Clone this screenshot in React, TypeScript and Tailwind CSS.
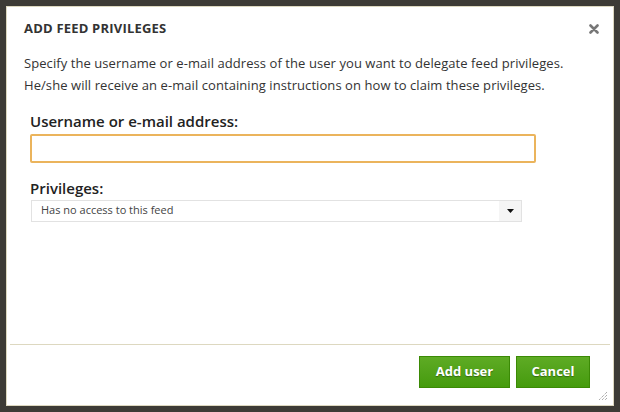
import { useState } from "react";

const font = { fontFamily: '"Open Sans", "Noto Sans", sans-serif' };

const App = () => {
  const [email, setEmail] = useState("");

  return (
    <div className="w-[620px] h-[412px] bg-[#3d3b36] p-[6px] overflow-hidden" style={font}>
      <div className="h-[400px] w-[608px] bg-white border border-[#ddd8c0] flex flex-col relative">
        {/* Header */}
        <div className="flex items-center justify-between pl-[17px] pr-[14px] pt-[12px]">
          <h2 className="text-[13px] font-bold text-[#333] tracking-[0.2px]">ADD FEED PRIVILEGES</h2>
          <button className="text-[#777] text-[15px] font-bold leading-none" aria-label="Close">
            <svg width="10" height="10" viewBox="0 0 10 10">
              <path d="M1.5 1.5l7 7M8.5 1.5l-7 7" stroke="#777" strokeWidth="2.6" strokeLinecap="round" />
            </svg>
          </button>
        </div>

        {/* Body */}
        <div className="pl-[17px] pr-[14px] pt-[13px] flex-1">
          <p className="text-[13px] leading-[22px] text-[#333] tracking-[0.07px]">
            Specify the username or e-mail address of the user you want to delegate feed privileges.
            <br />
            He/she will receive an e-mail containing instructions on how to claim these privileges.
          </p>

          <div className="pl-[6px] mt-[15px]">
            <label className="block text-[15px] font-semibold text-[#222] leading-[20px]">
              Username or e-mail address:
            </label>
            <input
              autoFocus
              value={email}
              onChange={(e) => setEmail(e.target.value)}
              className="mt-[3px] block w-[506px] h-[29px] border-2 border-[#ebb45c] rounded-[2px] px-[3px] text-[13px] outline-none caret-[#222]"
            />

            <label className="block text-[15px] font-semibold text-[#222] leading-[20px] mt-[15px]">
              Privileges:
            </label>
            <div className="ml-[1px] mt-[2px] w-[491px] h-[22px] border border-[#e2e2e2] flex items-center">
              <span className="flex-1 pl-[9px] text-[11px] text-[#444]">Has no access to this feed</span>
              <span className="w-[22px] h-full bg-[#f5f5f5] flex items-center justify-center">
                <svg width="7" height="4" viewBox="0 0 7 4">
                  <path d="M0 0h7L3.5 4z" fill="#111" />
                </svg>
              </span>
            </div>
          </div>
        </div>

        {/* Footer */}
        <div className="mx-[3px] border-t border-[#ddd8c0] h-[61px] flex items-start justify-end gap-[6px] pt-[11px] pr-[20px]">
          <button className="h-[32px] w-[91px] border border-[#3b8a05] bg-gradient-to-b from-[#5eab24] to-[#459b0c] text-white text-[13px] font-bold [text-shadow:0_1px_1px_rgba(0,0,0,0.35)]">
            Add user
          </button>
          <button className="h-[32px] w-[74px] border border-[#3b8a05] bg-gradient-to-b from-[#5eab24] to-[#459b0c] text-white text-[13px] font-bold [text-shadow:0_1px_1px_rgba(0,0,0,0.35)]">
            Cancel
          </button>
        </div>

        {/* Resize grip */}
        <svg className="absolute right-[5px] bottom-[4px]" width="10" height="10" viewBox="0 0 10 10">
          <path d="M9 1L1 9M9 4L4 9M9 7L7 9" stroke="#888" strokeWidth="1" strokeDasharray="1 1" />
        </svg>
      </div>
    </div>
  );
};

export default App;
